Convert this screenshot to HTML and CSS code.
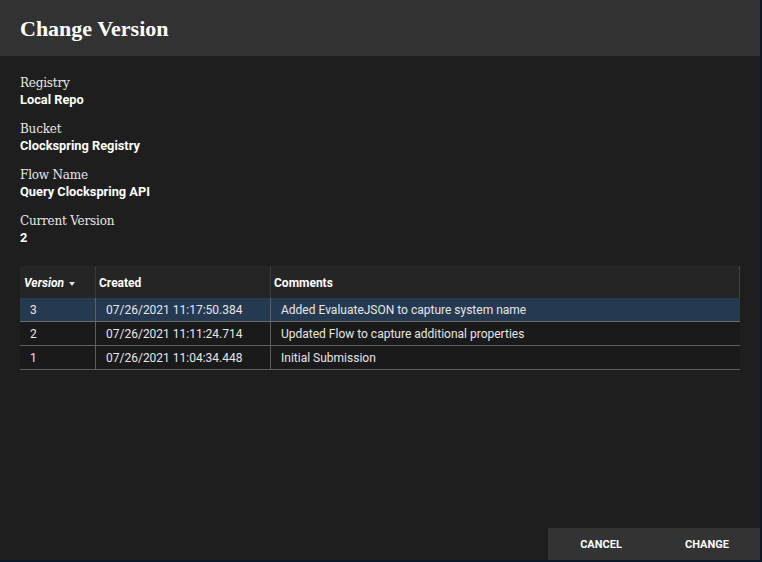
FILE: index.html
```html
<!DOCTYPE html>
<html>
<head>
<meta charset="utf-8">
<link rel="stylesheet" href="styles.css">
</head>
<body>
<div class="dialog">
  <div class="dialog-header">
    <h1 class="dialog-title">Change Version</h1>
  </div>
  <div class="dialog-body">
    <div class="field">
      <div class="field-label">Registry</div>
      <div class="field-value">Local Repo</div>
    </div>
    <div class="field">
      <div class="field-label">Bucket</div>
      <div class="field-value">Clockspring Registry</div>
    </div>
    <div class="field">
      <div class="field-label">Flow Name</div>
      <div class="field-value">Query Clockspring API</div>
    </div>
    <div class="field">
      <div class="field-label">Current Version</div>
      <div class="field-value">2</div>
    </div>
    <div class="grid">
      <div class="grid-row grid-head">
        <div class="cell col-version sorted">Version <span class="sort-caret"></span></div>
        <div class="cell col-created">Created</div>
        <div class="cell col-comments">Comments</div>
      </div>
      <div class="grid-row selected">
        <div class="cell col-version">3</div>
        <div class="cell col-created">07/26/2021 11:17:50.384</div>
        <div class="cell col-comments">Added EvaluateJSON to capture system name</div>
      </div>
      <div class="grid-row">
        <div class="cell col-version">2</div>
        <div class="cell col-created">07/26/2021 11:11:24.714</div>
        <div class="cell col-comments">Updated Flow to capture additional properties</div>
      </div>
      <div class="grid-row">
        <div class="cell col-version">1</div>
        <div class="cell col-created">07/26/2021 11:04:34.448</div>
        <div class="cell col-comments">Initial Submission</div>
      </div>
    </div>
  </div>
  <div class="dialog-footer">
    <div class="button-bar">
      <button class="btn">CANCEL</button>
      <button class="btn">CHANGE</button>
    </div>
  </div>
</div>
</body>
</html>
```
FILE: styles.css
```css
html, body {
  margin: 0;
  padding: 0;
  background: #0c1927;
}
body {
  width: 762px;
  height: 562px;
  overflow: hidden;
}
.dialog {
  width: 760px;
  height: 560px;
  background: #1e1e1e;
  display: flex;
  flex-direction: column;
}
.dialog-header {
  height: 56px;
  background: #323232;
  display: flex;
  align-items: center;
  padding-left: 20px;
  box-sizing: border-box;
}
.dialog-title {
  margin: 0;
  font-family: "Liberation Serif", serif;
  font-weight: bold;
  font-size: 22px;
  color: #ffffff;
  line-height: 1;
  position: relative;
  top: 1px;
}
.dialog-body {
  flex: 1;
  padding: 19px 20px 0 20px;
}
.field {
  height: 46px;
}
.field-label {
  font-family: "DejaVu Serif", serif;
  font-size: 12px;
  color: #e8e8e8;
  line-height: 17px;
  letter-spacing: -0.2px;
}
.field-value {
  font-family: Roboto, "Liberation Sans", sans-serif;
  font-weight: 700;
  font-size: 12.8px;
  color: #ffffff;
  line-height: 16px;
}
.grid {
  margin-top: 7px;
  width: 720px;
  font-family: Roboto, "Liberation Sans", sans-serif;
  font-size: 12px;
  color: #e6e6e6;
}
.grid-row {
  display: flex;
  height: 24px;
  background: #1a1a1a;
  border-bottom: 1px solid #5e5e5e;
  box-sizing: border-box;
}
.grid-row.selected {
  background: #253a51;
  border-bottom-color: #6a6a6a;
}
.grid-head {
  height: 32px;
  background: #252525;
  border-bottom: none;
  border-right: 1px solid #444;
}
.cell {
  display: flex;
  align-items: center;
  padding-left: 10px;
  box-sizing: border-box;
  white-space: nowrap;
}
.grid-row .cell + .cell {
  border-left: 1px solid #5e5e5e;
}
.grid-head .cell {
  font-weight: 700;
  color: #ffffff;
  padding-left: 3px;
  padding-top: 1px;
}
.grid-head .col-version {
  padding-left: 4px;
}
.grid-head .cell + .cell {
  border-left: 1px solid #3a3a3a;
}
.grid-head .sorted {
  font-style: italic;
}
.sort-caret {
  display: inline-block;
  width: 0;
  height: 0;
  margin-left: 5px;
  margin-top: 2px;
  border-left: 3.5px solid transparent;
  border-right: 3.5px solid transparent;
  border-top: 4px solid #e0e0e0;
}
.col-version {
  width: 75px;
}
.col-created {
  width: 175px;
}
.col-comments {
  flex: 1;
}
.dialog-footer {
  display: flex;
  justify-content: flex-end;
}
.button-bar {
  display: flex;
  background: #333333;
  width: 212px;
  height: 32px;
}
.btn {
  flex: 1;
  background: transparent;
  border: none;
  color: #ffffff;
  font-family: Roboto, "Liberation Sans", sans-serif;
  font-weight: 700;
  font-size: 11px;
  padding: 0;
  cursor: pointer;
}
```
